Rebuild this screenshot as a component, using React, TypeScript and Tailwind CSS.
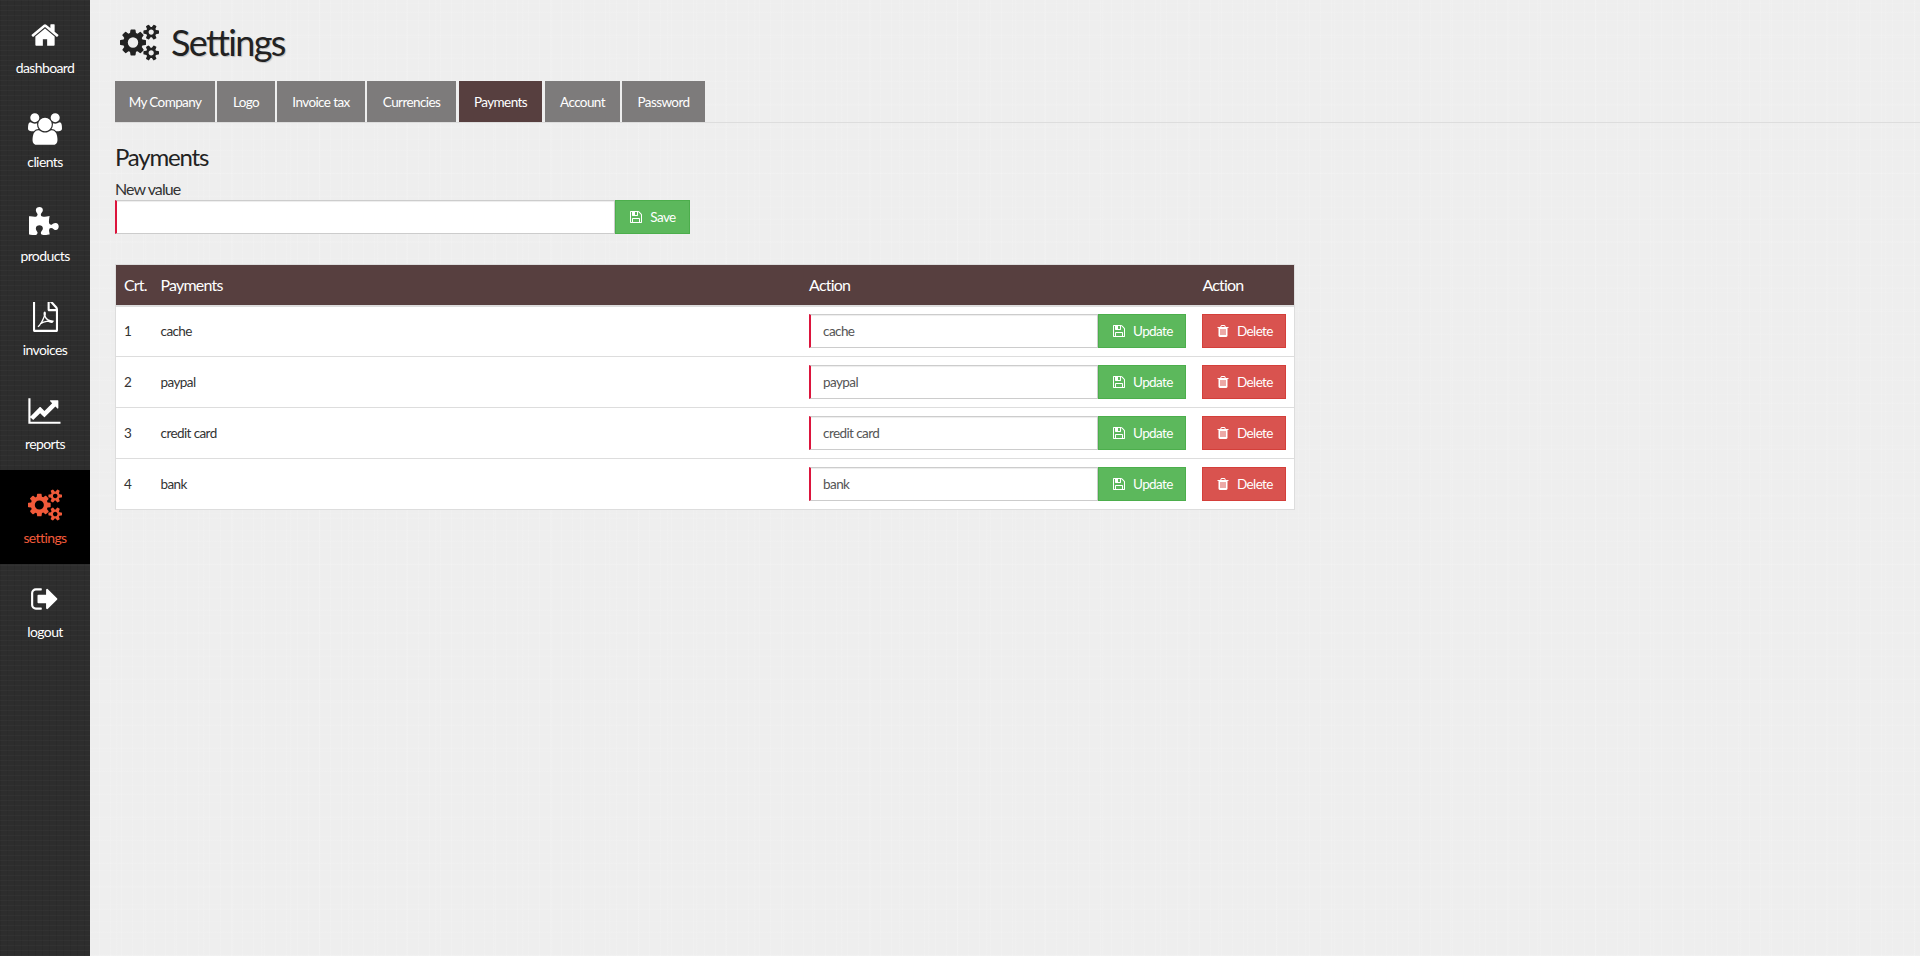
import React from 'react';

const HOME = 'M1472 992v480q0 26-19 45t-45 19h-384v-384h-256v384h-384q-26 0-45-19t-19-45v-480q0-1 .5-3t.5-3l575-474 575 474q1 2 1 6zm223-69l-62 74q-8 9-21 11h-3q-13 0-21-7l-692-577-692 577q-12 8-24 7-13-2-21-11l-62-74q-8-10-7-23.500t11-21.500l719-599q32-26 76-26t76 26l244 204v-195q0-14 9-23t23-9h192q14 0 23 9t9 23v408l219 182q10 8 11 21.500t-7 23.500z';
const USERS = 'M593 896q-162 5-265 128h-134q-82 0-138-40.500t-56-118.500q0-353 124-353 6 0 43.500 21t97.500 42.500 119 21.500q67 0 133-23-5 37-5 66 0 139 81 256zm1071 637q0 120-73 189.500t-194 69.500h-874q-121 0-194-69.500t-73-189.500q0-53 3.500-103.500t14-109 26.500-108.500 43-97.500 62-81 85.500-53.500 111.500-20q10 0 43 21.500t73 48 107 48 135 21.500 135-21.500 107-48 73-48 43-21.500q61 0 111.500 20t85.500 53.500 62 81 43 97.500 26.500 108.500 14 109 3.500 103.500zm-1024-1277q0 106-75 181t-181 75-181-75-75-181 75-181 181-75 181 75 75 181zm704 384q0 159-112.500 271.500t-271.500 112.500-271.500-112.500-112.500-271.500 112.500-271.500 271.500-112.500 271.500 112.500 112.500 271.500zm576 225q0 78-56 118.500t-138 40.500h-134q-103-123-265-128 81-117 81-256 0-29-5-66 66 23 133 23 59 0 119-21.500t97.500-42.500 43.500-21q124 0 124 353zm-128-609q0 106-75 181t-181 75-181-75-75-181 75-181 181-75 181 75 75 181z';
const PUZZLE = 'M1664 1098q0 81-44.500 135t-123.500 54q-41 0-77.500-17.500t-59-38-56.500-38-71-17.500q-110 0-110 124 0 39 16 115t15 115v5q-22 0-33 1-34 3-97.500 11.500t-115.500 13.500-98 5q-61 0-103-26.500t-42-83.500q0-37 17.500-71t38-56.500 38-59 17.500-77.500q0-79-54-123.500t-135-44.500q-84 0-143 45.500t-59 127.500q0 43 15 83t33.500 64.500 33.500 53 15 50.500q0 45-46 89-37 35-117 35-95 0-245-24-9-2-27.500-4t-27.500-4l-13-2q-1 0-3-1-2 0-2-1v-1024q2 1 17.500 3.500t34 5 21.500 3.500q150 24 245 24 80 0 117-35 46-44 46-89 0-22-15-50.500t-33.500-53-33.500-64.500-15-83q0-82 59-127.500t144-45.500q80 0 134 44.500t54 123.500q0 41-17.500 77.500t-38 59-38 56.500-17.500 71q0 57 42 83.500t103 26.500q64 0 180-15t163-17v2q-1 2-3.500 17.500t-5 34-3.500 21.500q-24 150-24 245 0 80 35 117 44 46 89 46 22 0 50.500-15t53-33.500 64.500-33.500 83-15q82 0 127.500 59t45.500 143z';
const CHART = 'M1920 1536v128h-1920v-1536h128v1408h1792zm-128-1248v435q0 21-19.500 29.500t-35.500-7.500l-121-121-633 633q-10 10-23 10t-23-10l-233-233-416 416-192-192 585-585q10-10 23-10t23 10l233 233 464-464-121-121q-16-16-7.500-35.500t29.500-19.500h435q14 0 23 9t9 23z';
const COGS = 'M896 896q0-106-75-181t-181-75-181 75-75 181 75 181 181 75 181-75 75-181zm768 512q0-52-38-90t-90-38-90 38-38 90q0 53 37.500 90.500t90.500 37.500 90.500-37.500 37.500-90.500zm0-1024q0-52-38-90t-90-38-90 38-38 90q0 53 37.500 90.500t90.500 37.500 90.500-37.500 37.500-90.500zm-384 421v185q0 10-7 19.500t-16 10.500l-155 24q-11 35-32 76 34 48 90 115 7 11 7 20 0 12-7 19-23 30-82.500 89.500t-78.500 59.500q-11 0-21-7l-115-90q-37 19-77 31-11 108-23 155-7 24-30 24h-186q-11 0-20-7.500t-10-17.500l-23-153q-34-10-75-31l-118 89q-7 7-20 7-11 0-21-8-144-133-144-160 0-9 7-19 10-14 41-53t47-61q-23-44-35-82l-152-24q-10-1-17-9.500t-7-19.500v-185q0-10 7-19.500t16-10.500l155-24q11-35 32-76-34-48-90-115-7-11-7-20 0-12 7-20 22-30 82-89t79-59q11 0 21 7l115 90q34-18 77-32 11-108 23-154 7-24 30-24h186q11 0 20 7.500t10 17.500l23 153q34 10 75 31l118-89q8-7 20-7 11 0 21 8 144 133 144 160 0 8-7 19-12 16-42 54t-45 60q23 48 34 82l152 23q10 2 17 10.500t7 19.500zm640 533v140q0 16-149 31-12 27-30 52 51 113 51 138 0 4-4 7-122 71-124 71-8 0-46-47t-52-68q-20 2-30 2t-30-2q-14 21-52 68t-46 47q-2 0-124-71-4-3-4-7 0-25 51-138-18-25-30-52-149-15-149-31v-140q0-16 149-31 13-29 30-52-51-113-51-138 0-4 4-7 4-2 35-20t59-34 30-16q8 0 46 46.500t52 67.500q20-2 30-2t30 2q51-71 92-112l6-2q4 0 124 70 4 3 4 7 0 25-51 138 17 23 30 52 149 15 149 31zm0-1024v140q0 16-149 31-12 27-30 52 51 113 51 138 0 4-4 7-122 71-124 71-8 0-46-47t-52-68q-20 2-30 2t-30-2q-14 21-52 68t-46 47q-2 0-124-71-4-3-4-7 0-25 51-138-18-25-30-52-149-15-149-31v-140q0-16 149-31 13-29 30-52-51-113-51-138 0-4 4-7 4-2 35-20t59-34 30-16q8 0 46 46.500t52 67.500q20-2 30-2t30 2q51-71 92-112l6-2q4 0 124 70 4 3 4 7 0 25-51 138 17 23 30 52 149 15 149 31z';
const SIGN_OUT = 'M704 1440q0 4 1 20t.5 26.500-3 23.500-10 19.500-20.500 6.500h-320q-119 0-203.500-84.500t-84.500-203.500v-704q0-119 84.500-203.500t203.500-84.500h320q13 0 22.500 9.500t9.500 22.500q0 4 1 20t.5 26.500-3 23.500-10 19.500-20.500 6.500h-320q-66 0-113 47t-47 113v704q0 66 47 113t113 47h312l11.500 1 11.500 3 8 5.500 7 9 2 13.500zm928-544q0 26-19 45l-544 544q-19 19-45 19t-45-19-19-45v-288h-448q-26 0-45-19t-19-45v-384q0-26 19-45t45-19h448v-288q0-26 19-45t45-19 45 19l544 544q19 19 19 45z';
const SAVE = 'M512 1536h768v-384h-768v384zm896 0h128v-896q0-14-10-38.500t-20-34.500l-281-281q-10-10-34-20t-39-10v416q0 40-28 68t-68 28h-576q-40 0-68-28t-28-68v-416h-128v1280h128v-416q0-40 28-68t68-28h832q40 0 68 28t28 68v416zm-384-928v-320q0-13-9.500-22.500t-22.500-9.500h-192q-13 0-22.500 9.500t-9.500 22.500v320q0 13 9.500 22.500t22.500 9.500h192q13 0 22.500-9.500t9.500-22.500zm640 32v928q0 40-28 68t-68 28h-1344q-40 0-68-28t-28-68v-1344q0-40 28-68t68-28h928q40 0 88 20t76 48l280 280q28 28 48 76t20 88z';
const TRASH = 'M704 1376v-704q0-14-9-23t-23-9h-64q-14 0-23 9t-9 23v704q0 14 9 23t23 9h64q14 0 23-9t9-23zm256 0v-704q0-14-9-23t-23-9h-64q-14 0-23 9t-9 23v704q0 14 9 23t23 9h64q14 0 23-9t9-23zm256 0v-704q0-14-9-23t-23-9h-64q-14 0-23 9t-9 23v704q0 14 9 23t23 9h64q14 0 23-9t9-23zm-544-992h448l-48-117q-7-9-17-11h-317q-10 2-17 11zm928 32v64q0 14-9 23t-23 9h-96v948q0 83-47 143.500t-113 60.500h-832q-66 0-113-58.500t-47-141.500v-952h-96q-14 0-23-9t-9-23v-64q0-14 9-23t23-9h309l70-167q15-37 54-63t79-26h320q40 0 79 26t54 63l70 167h309q14 0 23 9t9 23z';

const Glyph: React.FC<{ d: string; w: number; h: number; vb?: string }> = ({ d, w, h, vb = '0 0 1792 1792' }) => (
    <svg width={w} height={h} viewBox={vb} fill="currentColor"><path d={d} /></svg>
);

const PdfIcon = () => (
    <svg width={25} height={30} viewBox="128 128 1536 1664" preserveAspectRatio="none">
        <path fill="currentColor" d="M1596 380q28 28 48 76t20 88v1152q0 40-28 68t-68 28h-1344q-40 0-68-28t-28-68v-1600q0-40 28-68t68-28h896q40 0 88 20t76 48zm-444-244v376h376q-10-29-22-41l-313-313q-12-12-41-22zm384 1528v-1024h-416q-40 0-68-28t-28-68v-416h-768v1536h1280z" />
        <path fill="none" stroke="currentColor" strokeWidth="80" d="M430 1500Q650 1350 830 900Q790 690 850 690Q910 710 860 910Q980 1180 1350 1200Q1300 1300 1040 1190Q760 1220 560 1340" />
    </svg>
);

const navItems = [
    { label: 'dashboard', icon: <Glyph d={HOME} w={30} h={30} /> },
    { label: 'clients', icon: <Glyph d={USERS} w={34} h={32} vb="0 0 1920 1792" /> },
    { label: 'products', icon: <Glyph d={PUZZLE} w={32} h={32} /> },
    { label: 'invoices', icon: <PdfIcon /> },
    { label: 'reports', icon: <Glyph d={CHART} w={35} h={30} vb="0 0 2048 1792" /> },
    { label: 'settings', icon: <Glyph d={COGS} w={34} h={32} vb="0 0 1920 1792" />, active: true },
    { label: 'logout', icon: <Glyph d={SIGN_OUT} w={30} h={30} /> },
];

const tabs = [
    { label: 'My Company', width: 'w-[100px]' },
    { label: 'Logo', width: 'w-[58px]' },
    { label: 'Invoice tax', width: 'w-[88px]' },
    { label: 'Currencies', width: 'w-[89px]' },
    { label: 'Payments', width: 'w-[83px] mx-[1px]', active: true },
    { label: 'Account', width: 'w-[75px]' },
    { label: 'Password', width: 'w-[83px]' },
];

const payments = ['cache', 'paypal', 'credit card', 'bank'];

const inputClass = "flex-1 min-w-0 bg-white border border-[#ccc] border-l-[2px] border-l-[#dc143c] shadow-[inset_0_1px_1px_rgba(0,0,0,0.075)] outline-none";

const App: React.FC = () => {
    return (
        <div className="flex min-h-[956px] bg-[#eeeeee] bg-[repeating-linear-gradient(0deg,rgba(255,255,255,0.16)_0px,rgba(255,255,255,0)_1px,rgba(0,0,0,0)_17px),repeating-linear-gradient(90deg,rgba(255,255,255,0.22)_0px,rgba(255,255,255,0)_1px,rgba(0,0,0,0)_11px),repeating-linear-gradient(90deg,rgba(255,255,255,0.12)_0px,rgba(255,255,255,0)_2px,rgba(0,0,0,0)_29px),repeating-linear-gradient(0deg,rgba(255,255,255,0.12)_0px,rgba(255,255,255,0)_2px,rgba(0,0,0,0)_23px)] text-[#333] font-['Lato',sans-serif] text-[13.5px] tracking-[-0.6px]">
            <div className="w-[90px] shrink-0 bg-[#2d2d2d] bg-[repeating-linear-gradient(0deg,rgba(255,255,255,0.025)_0px,rgba(255,255,255,0.025)_1px,rgba(0,0,0,0)_1px,rgba(0,0,0,0)_5px),repeating-linear-gradient(90deg,rgba(0,0,0,0.06)_0px,rgba(0,0,0,0.06)_1px,rgba(0,0,0,0)_1px,rgba(0,0,0,0)_7px)]">
                {navItems.map(item => (
                    <div key={item.label} className={`h-[94px] flex flex-col items-center pt-[19px] ${item.active ? 'bg-black text-[#f15a3a]' : 'text-white'}`}>
                        <div className="h-[32px] flex items-center justify-center">{item.icon}</div>
                        <div className="mt-[7px] text-[14px] leading-[20px]">{item.label}</div>
                    </div>
                ))}
            </div>

            <div className="flex-1 pl-[25px] pt-[20px]">
                <h1 className="flex items-center h-[44px] pl-[5px] gap-[12px] text-[36px] tracking-[-1.7px] text-[#222] leading-[44px] [text-shadow:1px_1px_1px_rgba(0,0,0,0.2)]">
                    <Glyph d={COGS} w={39} h={37} vb="0 0 1920 1792" />
                    <span>Settings</span>
                </h1>

                <div className="mt-[17px] flex gap-[2px] h-[42px] border-b border-[#ddd]">
                    {tabs.map(tab => (
                        <div key={tab.label} className={`${tab.width} pt-[1px] flex items-center justify-center text-white ${tab.active ? 'bg-[#573f3f]' : 'bg-[#7d7b7b]'}`}>{tab.label}</div>
                    ))}
                </div>

                <h2 className="mt-[19px] text-[24px] tracking-[-1.2px] leading-[30px] text-[#222]">Payments</h2>
                <div className="mt-[7px] text-[16px] tracking-[-0.9px] leading-[20px] text-[#333]">New value</div>
                <div className="mt-[1px] flex w-[575px] h-[34px]">
                    <input className={inputClass} />
                    <button className="w-[75px] flex items-center justify-center gap-[7px] bg-[#5cb85c] border border-[#4cae4c] text-white"><Glyph d={SAVE} w={14} h={14} />Save</button>
                </div>

                <table className="mt-[30px] w-[1180px] table-fixed border border-[#ddd] border-collapse bg-white">
                    <colgroup>
                        <col className="w-[37px]" />
                        <col className="w-[648px]" />
                        <col className="w-[393px]" />
                        <col className="w-[100px]" />
                    </colgroup>
                    <thead>
                        <tr className="h-[41px] bg-[#573f3f] text-white text-left border-b-2 border-[#ddd]">
                            <th className="px-[8px] font-normal text-[16px] tracking-[-0.8px]">Crt.</th>
                            <th className="px-[8px] font-normal text-[16px] tracking-[-0.8px]">Payments</th>
                            <th className="px-[8px] font-normal text-[16px] tracking-[-0.8px]">Action</th>
                            <th className="px-[8px] font-normal text-[16px] tracking-[-0.8px]">Action</th>
                        </tr>
                    </thead>
                    <tbody>
                        {payments.map((name, i) => (
                            <tr key={name} className="h-[51px] border-t border-[#ddd]">
                                <td className="px-[8px]">{i + 1}</td>
                                <td className="px-[8px]">{name}</td>
                                <td className="px-[8px]">
                                    <div className="flex h-[34px]">
                                        <input readOnly value={name} className={`${inputClass} pl-[12px] text-[#555]`} />
                                        <button className="w-[88px] flex items-center justify-center gap-[7px] bg-[#5cb85c] border border-[#4cae4c] text-white"><Glyph d={SAVE} w={14} h={14} />Update</button>
                                    </div>
                                </td>
                                <td className="px-[8px]">
                                    <button className="w-[84px] h-[34px] flex items-center justify-center gap-[7px] bg-[#d9534f] border border-[#d43f3a] text-white"><Glyph d={TRASH} w={14} h={14} />Delete</button>
                                </td>
                            </tr>
                        ))}
                    </tbody>
                </table>
            </div>
        </div>
    );
};

export default App;
